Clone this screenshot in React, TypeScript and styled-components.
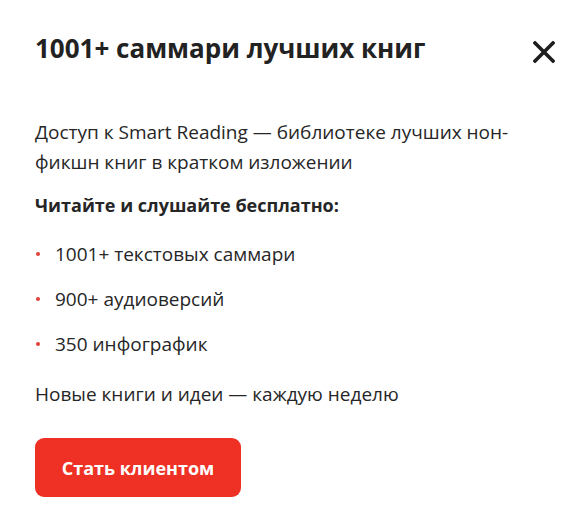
import React from 'react';
import styled, { createGlobalStyle } from 'styled-components';

const GlobalStyle = createGlobalStyle`
  html, body {
    margin: 0;
    padding: 0;
    background: #ffffff;
  }
  body {
    font-family: 'Open Sans', 'Noto Sans', sans-serif;
    color: #222222;
  }
`;

const Modal = styled.div`
  display: flex;
  flex-direction: column;
  width: 580px;
  height: 525px;
  box-sizing: border-box;
  padding: 28px 20px 0 35px;
  background: #ffffff;
`;

const Header = styled.div`
  display: flex;
  justify-content: space-between;
  align-items: center;
`;

const Title = styled.h2`
  margin: 0;
  font-size: 26px;
  line-height: 32px;
  font-weight: 700;
  color: #222222;
`;

const CloseButton = styled.button`
  display: flex;
  align-items: center;
  justify-content: center;
  width: 32px;
  height: 32px;
  margin: 8px 0 0 0;
  padding: 0;
  border: none;
  background: none;
  cursor: pointer;
`;

const Text = styled.p<{ bold?: boolean; gap?: number }>`
  margin: ${({ gap = 0 }) => gap}px 0 0;
  max-width: 490px;
  font-size: ${({ bold }) => (bold ? 18 : 19)}px;
  line-height: 30px;
  font-weight: ${({ bold }) => (bold ? 700 : 400)};
  color: #262626;
`;

const List = styled.ul`
  display: flex;
  flex-direction: column;
  gap: 15px;
  margin: 19px 0 0;
  padding: 0;
  list-style: none;
`;

const Item = styled.li`
  position: relative;
  padding-left: 20px;
  font-size: 19px;
  line-height: 30px;
  color: #262626;

  &::before {
    content: '';
    position: absolute;
    left: 1px;
    top: 13px;
    width: 4px;
    height: 4px;
    border-radius: 50%;
    background: #e0403a;
  }
`;

const CtaButton = styled.button`
  align-self: flex-start;
  width: 206px;
  height: 59px;
  margin-top: 29px;
  border: none;
  border-radius: 9px;
  background: #ee3124;
  color: #ffffff;
  font-family: inherit;
  font-size: 18px;
  font-weight: 700;
  cursor: pointer;
`;

const CloseIcon = () => (
  <svg width="22" height="22" viewBox="0 0 22 22" fill="none">
    <path d="M2 2L20 20M20 2L2 20" stroke="#1f1f1f" strokeWidth="3.6" strokeLinecap="square" />
  </svg>
);

const features = ['1001+ текстовых саммари', '900+ аудиоверсий', '350 инфографик'];

export default function App() {
  return (
    <>
      <GlobalStyle />
      <Modal>
        <Header>
          <Title>1001+ саммари лучших книг</Title>
          <CloseButton aria-label="Закрыть">
            <CloseIcon />
          </CloseButton>
        </Header>
        <Text gap={49}>Доступ к Smart Reading — библиотеке лучших нон-фикшн книг в кратком изложении</Text>
        <Text bold gap={13}>Читайте и слушайте бесплатно:</Text>
        <List>
          {features.map((item) => (
            <Item key={item}>{item}</Item>
          ))}
        </List>
        <Text gap={20}>Новые книги и идеи — каждую неделю</Text>
        <CtaButton>Стать клиентом</CtaButton>
      </Modal>
    </>
  );
}
